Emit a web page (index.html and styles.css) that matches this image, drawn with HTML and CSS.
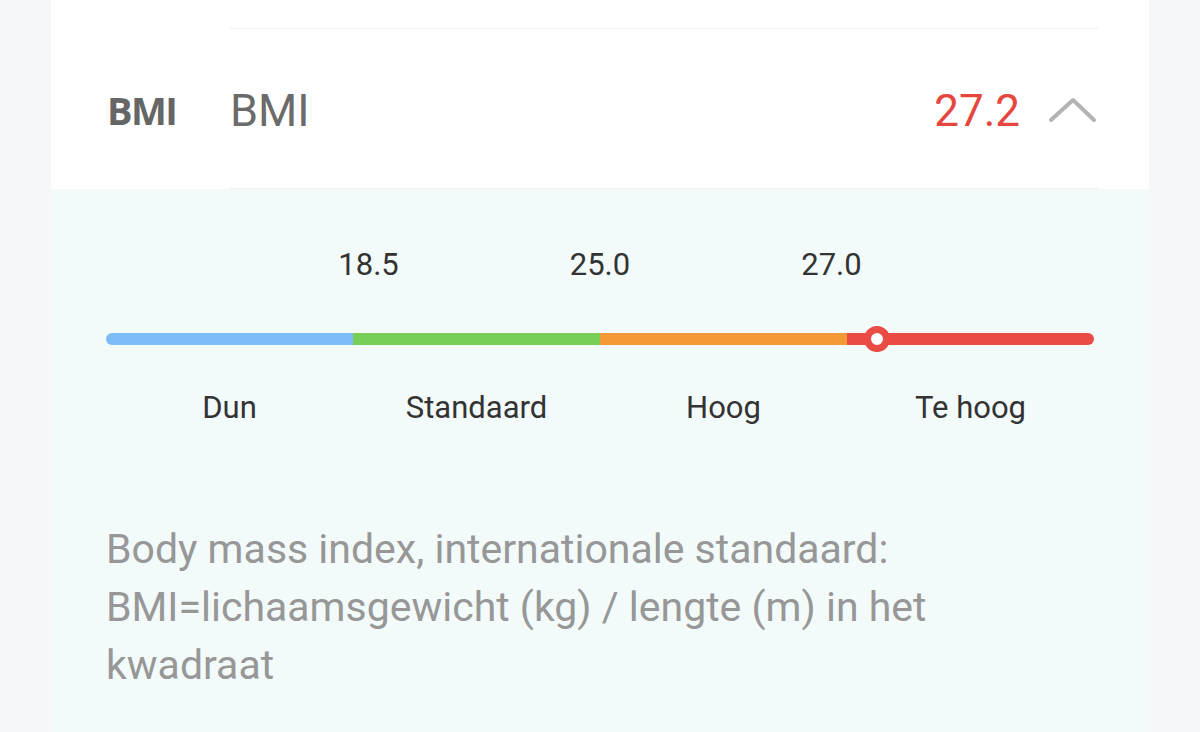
FILE: index.html
```html
<!DOCTYPE html>
<html lang="nl">
<head>
<meta charset="utf-8">
<title>BMI</title>
<link rel="stylesheet" href="styles.css">
</head>
<body>
<div class="card">
  <div class="prev-row"><div class="prev-line"></div></div>
  <div class="row">
    <div class="row-icon">BMI</div>
    <div class="row-main">
      <span class="row-title">BMI</span>
      <span class="row-value">27.2</span>
      <svg class="chevron" width="50" height="30" viewBox="0 0 50 30">
        <polyline points="3,23 25,3 46,23" fill="none" stroke="#b3b3b3" stroke-width="4" stroke-linecap="round" stroke-linejoin="round"/>
      </svg>
    </div>
  </div>
  <div class="panel">
    <div class="ticks">
      <span>18.5</span>
      <span>25.0</span>
      <span>27.0</span>
    </div>
    <div class="bar">
      <div class="seg seg-blue"></div>
      <div class="seg seg-green"></div>
      <div class="seg seg-orange"></div>
      <div class="seg seg-red"></div>
      <div class="marker" style="left: 771px"></div>
    </div>
    <div class="labels">
      <span>Dun</span>
      <span>Standaard</span>
      <span>Hoog</span>
      <span>Te hoog</span>
    </div>
    <p class="desc">Body mass index, internationale standaard: BMI=lichaamsgewicht (kg) / lengte (m) in het kwadraat</p>
  </div>
</div>
</body>
</html>
```
FILE: styles.css
```css
html, body {
  margin: 0;
  padding: 0;
  height: 100%;
  overflow: hidden;
}
body {
  background: #f6f7f9;
  font-family: Roboto, "Noto Sans", sans-serif;
}
.card {
  margin: 0 51px;
  width: 1098px;
  height: 732px;
  display: flex;
  flex-direction: column;
}
.prev-row {
  background: #fff;
  height: 29px;
  padding-left: 179px;
  padding-right: 51px;
}
.prev-line {
  height: 29px;
  border-bottom: 1px solid #eef0f2;
  box-sizing: border-box;
}
.row {
  background: #fff;
  height: 160px;
  display: flex;
}
.row-icon {
  width: 179px;
  box-sizing: border-box;
  padding-left: 56px;
  display: flex;
  align-items: center;
  font-family: "Open Sans", "Noto Sans", sans-serif;
  font-weight: 700;
  font-size: 38px;
  letter-spacing: -1.5px;
  color: #666;
  padding-top: 2px;
}
.row-main {
  flex: 1;
  margin-right: 51px;
  display: flex;
  align-items: center;
  border-bottom: 1px solid #eef0f2;
  padding-top: 4px;
}
.row-title {
  font-size: 45px;
  color: #6b6b6b;
  flex: 1;
}
.row-value {
  font-size: 44px;
  color: #e5473e;
  margin-right: 28px;
}
.chevron {
  display: block;
  margin-top: 2px;
}
.panel {
  flex: 1;
  background: #f2fafa;
  padding: 0 55px;
}
.ticks {
  display: flex;
  justify-content: center;
  gap: 171px;
  font-size: 31px;
  color: #333;
  margin-top: 59px;
  height: 34px;
  line-height: 34px;
}
.bar {
  position: relative;
  margin-top: 51px;
  height: 12px;
  display: flex;
}
.seg {
  flex: 1;
  height: 12px;
}
.seg-blue { background: #7dbcf6; border-radius: 6px 0 0 6px; }
.seg-green { background: #78cf57; }
.seg-orange { background: #f39a37; }
.seg-red { background: #ea4b45; border-radius: 0 6px 6px 0; }
.marker {
  position: absolute;
  top: -7px;
  width: 12px;
  height: 12px;
  border: 7px solid #ea4b45;
  border-radius: 50%;
  background: #fff;
  box-sizing: content-box;
  margin-left: -13px;
}
.labels {
  display: flex;
  margin-top: 44px;
  font-size: 31px;
  color: #333;
  height: 38px;
  line-height: 38px;
}
.labels span {
  flex: 1;
  text-align: center;
}
.desc {
  margin: 93px 0 0;
  font-size: 41px;
  line-height: 58px;
  color: #979797;
  width: 900px;
}
```
